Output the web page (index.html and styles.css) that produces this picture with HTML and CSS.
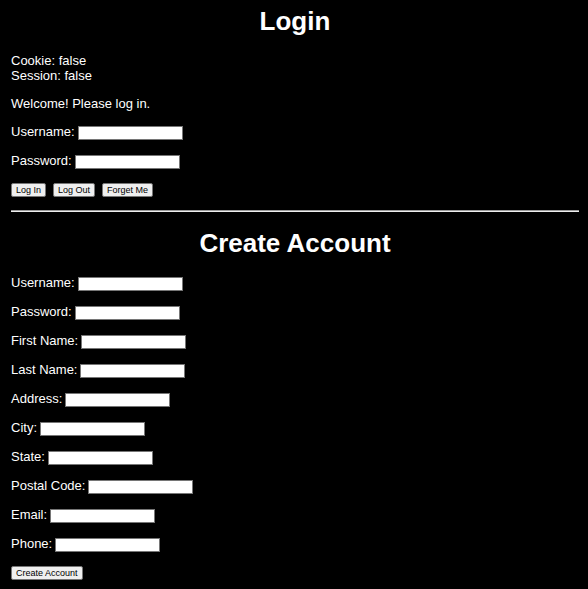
FILE: index.html
```html
<!DOCTYPE html>
<html lang="en">
<head>
<meta charset="utf-8">
<title>Login</title>
<link rel="stylesheet" href="styles.css">
</head>
<body>
<main>
  <h1>Login</h1>
  <p class="status">Cookie: false<br>Session: false</p>
  <p class="welcome">Welcome! Please log in.</p>
  <form class="form">
    <div class="field"><label for="login-user">Username:</label><input id="login-user" type="text"></div>
    <div class="field"><label for="login-pass">Password:</label><input id="login-pass" type="password"></div>
    <div class="actions">
      <button type="button">Log In</button>
      <button type="button">Log Out</button>
      <button type="button">Forget Me</button>
    </div>
  </form>
  <hr>
  <h1>Create Account</h1>
  <form class="form">
    <div class="field"><label for="user">Username:</label><input id="user" type="text"></div>
    <div class="field"><label for="pass">Password:</label><input id="pass" type="password"></div>
    <div class="field"><label for="first">First Name:</label><input id="first" type="text"></div>
    <div class="field"><label for="last">Last Name:</label><input id="last" type="text"></div>
    <div class="field"><label for="address">Address:</label><input id="address" type="text"></div>
    <div class="field"><label for="city">City:</label><input id="city" type="text"></div>
    <div class="field"><label for="state">State:</label><input id="state" type="text"></div>
    <div class="field"><label for="postal">Postal Code:</label><input id="postal" type="text"></div>
    <div class="field"><label for="email">Email:</label><input id="email" type="text"></div>
    <div class="field"><label for="phone">Phone:</label><input id="phone" type="text"></div>
    <div class="actions"><button type="button">Create Account</button></div>
  </form>
</main>
</body>
</html>
```
FILE: styles.css
```css
* {
  box-sizing: border-box;
}

body {
  margin: 0;
  padding: 6px 9px 9px 11px;
  background: #000;
  color: #fff;
  font: 13px/15px "Liberation Sans", Arial, sans-serif;
}

h1 {
  margin: 0 0 17px;
  font-size: 26px;
  line-height: 30px;
  text-align: center;
}

p {
  margin: 0 0 13px;
}

.form {
  display: flex;
  flex-direction: column;
  gap: 13px;
}

.field {
  display: flex;
  align-items: flex-start;
  gap: 3px;
  min-height: 16px;
}

input {
  align-self: flex-end;
  width: 105px;
  height: 14px;
  margin: 0;
  padding: 1px;
  border: 1px solid #767676;
  border-radius: 0;
  background: #fff;
  color: #000;
  font: 10px/10px "Liberation Sans", Arial, sans-serif;
}

.actions {
  display: flex;
  gap: 7px;
  padding-top: 1px;
}

button {
  height: 14px;
  margin: 0;
  padding: 0 4px;
  border: 1px solid #767676;
  border-radius: 2px;
  background: #efefef;
  color: #000;
  font: 9px/12px "Liberation Sans", Arial, sans-serif;
}

hr {
  height: 2px;
  margin: 13px 0 16px;
  border: 0;
  border-top: 1px solid #9a9a9a;
  background: #eee;
}
```
